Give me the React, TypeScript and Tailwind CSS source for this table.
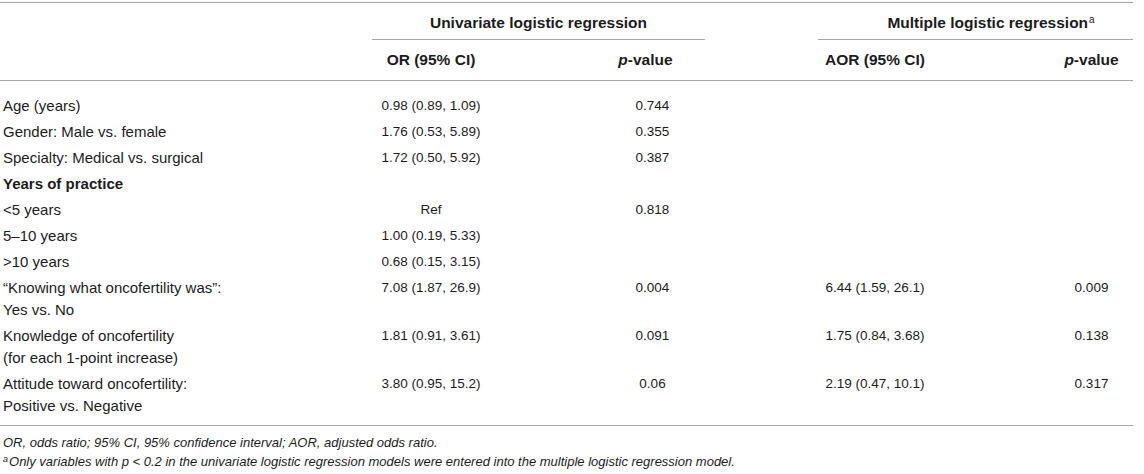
const rows: {
  label: string[];
  bold?: boolean;
  or?: string;
  p?: string;
  aor?: string;
  ap?: string;
}[] = [
  { label: ['Age (years)'], or: '0.98 (0.89, 1.09)', p: '0.744' },
  { label: ['Gender: Male vs. female'], or: '1.76 (0.53, 5.89)', p: '0.355' },
  { label: ['Specialty: Medical vs. surgical'], or: '1.72 (0.50, 5.92)', p: '0.387' },
  { label: ['Years of practice'], bold: true },
  { label: ['<5 years'], or: 'Ref', p: '0.818' },
  { label: ['5–10 years'], or: '1.00 (0.19, 5.33)' },
  { label: ['>10 years'], or: '0.68 (0.15, 3.15)' },
  {
    label: ['“Knowing what oncofertility was”:', 'Yes vs. No'],
    or: '7.08 (1.87, 26.9)',
    p: '0.004',
    aor: '6.44 (1.59, 26.1)',
    ap: '0.009',
  },
  {
    label: ['Knowledge of oncofertility', '(for each 1-point increase)'],
    or: '1.81 (0.91, 3.61)',
    p: '0.091',
    aor: '1.75 (0.84, 3.68)',
    ap: '0.138',
  },
  {
    label: ['Attitude toward oncofertility:', 'Positive vs. Negative'],
    or: '3.80 (0.95, 15.2)',
    p: '0.06',
    aor: '2.19 (0.47, 10.1)',
    ap: '0.317',
  },
];

const App = () => {
  return (
    <div className="w-[1144px] h-[474px] bg-white pt-[2px] text-[#1c1c1c] font-['Liberation_Sans',Arial,sans-serif] overflow-hidden">
      <table className="table-fixed border-collapse w-[1133px] border-t border-[#a8a8a8]">
        <colgroup>
          <col className="w-[372px]" />
          <col className="w-[118px]" />
          <col className="w-[110px]" />
          <col className="w-[105px]" />
          <col className="w-[113px]" />
          <col className="w-[114px]" />
          <col className="w-[118px]" />
          <col className="w-[83px]" />
        </colgroup>
        <thead>
          <tr className="h-[37px]">
            <th />
            <th
              colSpan={3}
              className="border-b border-[#a8a8a8] text-[15.5px] font-bold text-center pt-[3px]"
            >
              Univariate logistic regression
            </th>
            <th />
            <th
              colSpan={3}
              className="border-b border-[#a8a8a8] text-[15.5px] font-bold text-center pl-[31px] pt-[3px]"
            >
              Multiple logistic regression
              <sup className="font-normal text-[10px] ml-[1px]">a</sup>
            </th>
          </tr>
          <tr className="h-[41px] border-b border-[#a8a8a8] text-[15.5px] font-bold">
            <th />
            <th className="text-center">OR (95% CI)</th>
            <th />
            <th className="text-center pr-[14px]">
              <i>p</i>-value
            </th>
            <th />
            <th className="text-center">AOR (95% CI)</th>
            <th />
            <th className="text-center">
              <i>p</i>-value
            </th>
          </tr>
        </thead>
        <tbody className="border-b border-[#a8a8a8]">
          {rows.map((r, i) => {
            const pad =
              i === 0 ? 'pt-[14px] pb-[2px]' : i === rows.length - 1 ? 'pt-[2px] pb-[8px]' : 'py-[2px]';
            return (
              <tr key={i} className="align-top leading-[22px]">
                <td className={`${pad} pl-[3px] text-[15px] ${r.bold ? 'font-bold' : ''}`}>
                  {r.label.map((l, j) => (
                    <div key={j}>{l}</div>
                  ))}
                </td>
                <td className={`${pad} text-center text-[13.5px]`}>{r.or}</td>
                <td className={pad} />
                <td className={`${pad} text-center text-[13.5px]`}>{r.p}</td>
                <td className={pad} />
                <td className={`${pad} text-center text-[13.5px]`}>{r.aor}</td>
                <td className={pad} />
                <td className={`${pad} text-center text-[13.5px]`}>{r.ap}</td>
              </tr>
            );
          })}
        </tbody>
      </table>
      <div className="pt-[7px] pl-[3px] text-[13px] italic leading-[19px]">
        <p>OR, odds ratio; 95% CI, 95% confidence interval; AOR, adjusted odds ratio.</p>
        <p>
          <sup className="text-[9px] mr-[1px]">a</sup>Only variables with p &lt; 0.2 in the univariate logistic
          regression models were entered into the multiple logistic regression model.
        </p>
      </div>
    </div>
  );
};

export default App;
